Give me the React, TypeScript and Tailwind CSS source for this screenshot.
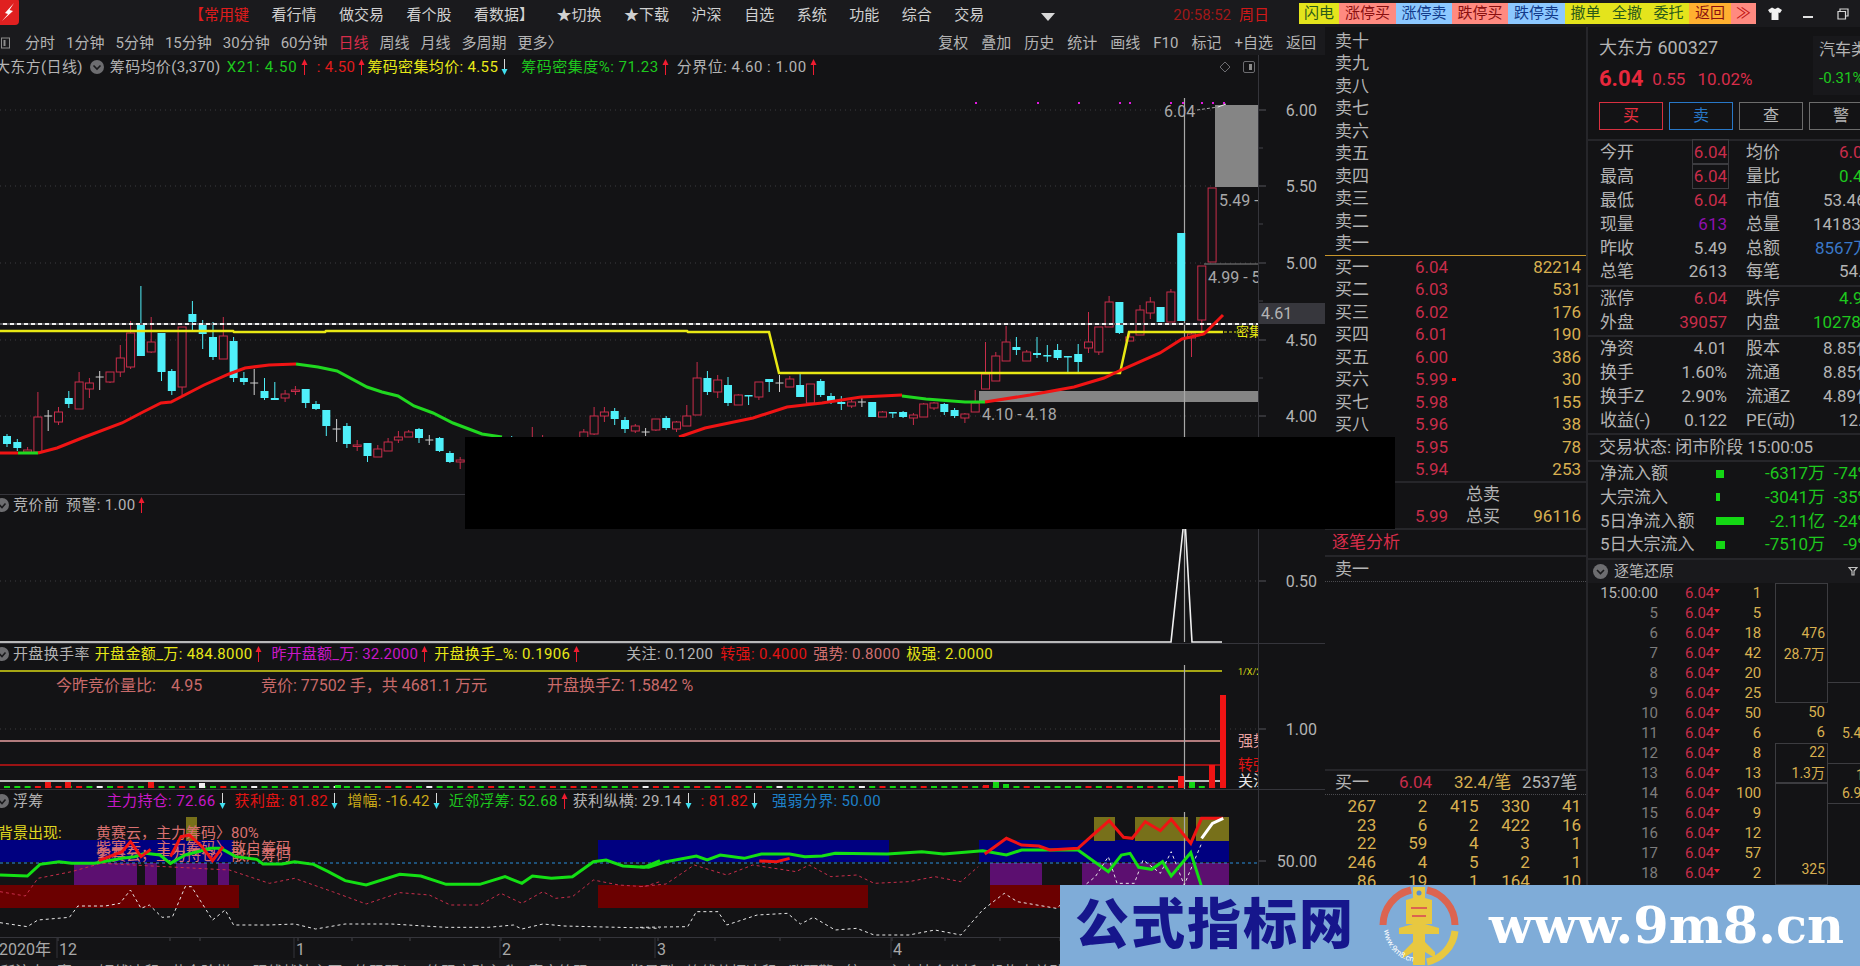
import React from "react";

// candle: type, body top, body bottom, wick top, wick bottom. c = cyan, r = red, x = cross
type Candle = [string, number, number, number, number];
const candles: (Candle | null)[] = [
  ["c", 436, 444, 434, 447], ["c", 442, 448, 439, 451], ["r", 450, 452, 447, 453], ["r", 417, 452, 392, 453],
  ["x", 416, 416, 410, 431], ["r", 412, 422, 407, 425], ["c", 398, 404, 391, 408], ["r", 382, 409, 372, 409],
  ["r", 383, 389, 378, 398], ["x", 377, 377, 371, 390], ["r", 372, 382, 372, 383], ["r", 358, 372, 345, 377],
  ["r", 333, 367, 321, 369], ["c", 324, 356, 286, 356], ["r", 342, 352, 317, 353], ["c", 333, 372, 333, 381],
  ["c", 371, 391, 369, 395], ["r", 327, 387, 327, 395], ["c", 314, 322, 301, 330], ["c", 323, 334, 320, 349],
  ["c", 337, 357, 322, 360], ["r", 336, 359, 317, 359], ["c", 341, 378, 337, 382], ["c", 378, 382, 372, 385],
  ["x", 383, 383, 369, 395], ["c", 391, 398, 378, 400], ["c", 398, 400, 382, 400], ["r", 394, 398, 390, 402],
  ["r", 390, 391, 386, 395], ["c", 389, 403, 389, 408], ["c", 404, 409, 401, 410], ["c", 410, 426, 410, 436],
  ["x", 429, 429, 419, 442], ["c", 426, 444, 423, 448], ["r", 445, 446, 440, 451], ["c", 443, 456, 443, 462],
  ["r", 449, 457, 445, 457], ["r", 442, 451, 438, 451], ["r", 437, 440, 431, 443], ["r", 432, 437, 430, 437],
  ["c", 429, 438, 428, 443], ["x", 440, 440, 435, 445], ["c", 438, 451, 437, 452], ["c", 453, 462, 451, 463],
  ["r", 460, 462, 457, 469], null, null, null, null,
  ["c", 440, 445, 436, 450], null, ["r", 440, 450, 427, 452], ["r", 440, 450, 435, 452], null, null, null,
  ["r", 432, 445, 429, 446], ["r", 416, 434, 407, 435], ["r", 412, 416, 407, 422], ["c", 411, 419, 408, 425],
  ["c", 420, 429, 417, 433], ["r", 426, 431, 424, 433], ["x", 432, 432, 428, 436], ["r", 419, 430, 419, 431],
  ["c", 418, 428, 416, 430], ["r", 422, 429, 421, 432], ["r", 416, 426, 405, 426], ["r", 378, 415, 362, 415],
  ["c", 378, 392, 371, 395], ["r", 380, 392, 375, 398], ["c", 385, 403, 377, 406], ["r", 395, 405, 394, 405],
  ["c", 395, 396, 395, 405], ["r", 382, 397, 382, 400], ["c", 379, 382, 379, 392], ["x", 383, 383, 375, 392],
  ["r", 379, 387, 376, 387], ["c", 385, 397, 372, 397], ["r", 384, 403, 384, 403], ["c", 381, 395, 379, 397],
  ["c", 396, 401, 393, 404], ["c", 402, 404, 396, 410], ["r", 402, 406, 400, 408], ["x", 402, 402, 398, 407],
  ["c", 402, 417, 402, 417], ["r", 412, 417, 411, 417], ["c", 412, 413, 412, 418], ["c", 412, 417, 411, 418],
  ["r", 415, 418, 413, 425], ["r", 404, 417, 403, 417], ["r", 403, 408, 402, 410], ["c", 404, 412, 403, 415],
  ["c", 410, 416, 408, 418], ["r", 414, 418, 413, 423], ["r", 403, 412, 390, 412], ["r", 374, 389, 342, 389],
  ["r", 356, 381, 352, 381], ["r", 342, 361, 326, 361], ["c", 347, 350, 337, 355], ["r", 352, 361, 350, 361],
  ["c", 353, 355, 337, 358], ["c", 355, 356, 345, 362], ["c", 350, 358, 344, 360], ["c", 356, 357, 356, 372],
  ["c", 354, 362, 344, 372], ["r", 342, 348, 312, 353], ["r", 327, 352, 327, 355], ["r", 302, 327, 296, 327],
  ["c", 302, 333, 302, 334], ["r", 337, 341, 332, 341], ["r", 310, 335, 305, 335], ["r", 302, 313, 297, 319],
  ["c", 307, 322, 307, 322], ["r", 292, 322, 289, 322], ["c", 233, 321, 233, 321], ["r", 334, 338, 333, 357],
  ["r", 266, 320, 266, 336], ["r", 188, 262, 188, 262],
];

const cx = (i: number) => 7 + 10.3 * i;
const z7 = (p: number[][]) => p.map(([x, y]) => `${x / 2.376},${630 + y / 3}`).join(" ");
const z8 = (p: number[][]) => p.map(([x, y]) => `${640 + x / 2.306},${630 + y / 3}`).join(" ");

const Arrow = ({ down }: { down?: boolean }) => (
  <svg width="7" height="16" viewBox="0 0 7 16" className="shrink-0">
    {down ? (
      <>
        <path d="M3.5 0V12" stroke="#d8d8d8" strokeWidth="1" />
        <path d="M0.5 10H6.5L3.5 16Z" fill="#40e0f0" />
      </>
    ) : (
      <>
        <path d="M3.5 4V16" stroke="#f01c30" strokeWidth="1" />
        <path d="M0.5 6H6.5L3.5 0Z" fill="#f01c30" />
      </>
    )}
  </svg>
);

const CheckDot = () => (
  <svg width="14" height="14" viewBox="0 0 14 14" className="-ml-[5px] mr-[4px] shrink-0">
    <circle cx="7" cy="7" r="7" fill="#6d6d70" />
    <path d="M3.5 6L7 9.5L10.5 5.5" stroke="#1a1a1c" strokeWidth="1.6" fill="none" />
  </svg>
);

const CandleMark = ({ c, i }: { c: Candle; i: number }) => {
  const [t, top, bot, wt, wb] = c;
  const x = cx(i);
  if (t === "x") {
    return (
      <g stroke="#cfcfcf" strokeWidth="1">
        <path d={`M${x} ${wt}V${wb}M${x - 4} ${top}H${x + 4}`} />
      </g>
    );
  }
  const col = t === "r" ? "#c82d4a" : "#4ff0fa";
  return (
    <g>
      <path d={`M${x} ${wt}V${wb}`} stroke={col} strokeWidth="1" />
      <rect
        x={x - 4}
        y={top}
        width="8"
        height={Math.max(bot - top, 1.5)}
        fill={t === "r" ? "#131315" : col}
        stroke={col}
        strokeWidth={t === "r" ? 1 : 0}
      />
    </g>
  );
};

const Panel = ({
  label,
  labelH,
  top,
  height,
  axis,
  children,
}: {
  label: React.ReactNode;
  labelH: string;
  top: number;
  height: number;
  axis: React.ReactNode;
  children: React.ReactNode;
}) => (
  <div className="flex border-b border-[#35353b]">
    <div className="w-[1258px] shrink-0">
      <div className={`flex items-center whitespace-nowrap overflow-hidden text-[15px] leading-none tracking-[0.35px] text-[#b4b4b4] ${labelH}`}>{label}</div>
      <svg width="1258" height={height} viewBox={`0 ${top} 1258 ${height}`} className="block">
        {children}
      </svg>
    </div>
    <div className="flex-1 border-l border-[#35353b]">{axis}</div>
  </div>
);

const AxisLabels = ({
  top,
  h,
  items,
  ticks,
  children,
}: {
  top: number;
  h: number;
  items: [string, number][];
  ticks?: number[];
  children?: React.ReactNode;
}) => (
  <svg width="66" height={h} viewBox={`1259 ${top} 66 ${h}`} className="block">
    {children}
    {items.map(([t, y]) => (
      <g key={t}>
        <path d={`M1259 ${y}H1266`} stroke="#55555a" />
        <text x="1317" y={y + 6} textAnchor="end" fontSize="16" fill="#b4b4b4">
          {t}
        </text>
      </g>
    ))}
    {(ticks || []).map((y) => (
      <path key={y} d={`M1259 ${y}H1263`} stroke="#44444a" />
    ))}
  </svg>
);

const MainLabel = () => (
  <>
    <span className="-ml-[5px]">大东方(日线)</span>
    <svg width="14" height="14" viewBox="0 0 14 14" className="ml-[7px] mr-[6px] shrink-0">
      <circle cx="7" cy="7" r="7" fill="#6d6d70" />
      <path d="M3.5 5.5L7 9L10.5 5.5" stroke="#1a1a1c" strokeWidth="1.6" fill="none" />
    </svg>
    <span>筹码均价(3,370)</span>
    <span className="ml-[6px] tracking-[0.9px] text-[#1ec81e]">X21: 4.50</span>
    <span className="ml-[3px]"><Arrow /></span>
    <span className="ml-[9px] text-[#e01c1c]">: 4.50</span>
    <span className="ml-[3px]"><Arrow /></span>
    <span className="ml-[2px] text-[#e8e818]">筹码密集均价: 4.55</span>
    <span className="ml-[3px]"><Arrow down /></span>
    <span className="ml-[13px] tracking-[0.5px] text-[#1ec81e]">筹码密集度%: 71.23</span>
    <span className="ml-[3px]"><Arrow /></span>
    <span className="ml-[8px] tracking-[0.5px]">分界位: 4.60 : 1.00</span>
    <span className="ml-[3px]"><Arrow /></span>
    <svg width="36" height="14" viewBox="0 0 36 14" className="ml-auto mr-[2px] shrink-0">
      <path d="M5 2L10 7L5 12L0 7Z" fill="none" stroke="#6c6c70" />
      <rect x="23.5" y="1.5" width="11" height="11" rx="1.5" fill="none" stroke="#6c6c70" />
      <rect x="29" y="4" width="3" height="6" fill="#8c8c8c" />
    </svg>
  </>
);

const MainChart = () => (
  <>
    {[110, 186, 263, 340, 416].map((y) => (
      <path key={y} d={`M0 ${y}H1258`} stroke="#3c3c40" strokeDasharray="1 4" />
    ))}
    <rect x="1215" y="105" width="43" height="82" fill="#858585" />
    <rect x="979" y="391" width="279" height="11" fill="#858585" />
    <path d="M1204 264H1258" stroke="#858585" />
    <path d="M1184.5 98V437" stroke="#a8a8a8" strokeWidth="1.2" />
    {candles.map((c, i) => (c ? <CandleMark key={i} c={c} i={i} /> : null))}
    <polyline points="0,331 233,331 234,332 325,332 326,331 687,331 688,332 769,332 779,373 1120,373 1129,332 1223,332" fill="none" stroke="#e8e814" strokeWidth="2.5" />
    <path d="M0 324H1258" stroke="#f0f0f0" strokeWidth="2" />
    <path d="M0 324H1258" stroke="#55555a" strokeWidth="2" strokeDasharray="3 4" />
    <polyline points="0,453 18,453" fill="none" stroke="#f01414" strokeWidth="3" />
    <polyline points="18,453 38,453" fill="none" stroke="#20d820" strokeWidth="3" />
    <polyline points="38,453 57,448 82,438 122,423 143,412 161,403 171,402 204,385 229,374 245,368 269,365 296,364" fill="none" stroke="#f01414" strokeWidth="3" />
    <polyline points="296,364 318,367 337,371 367,387 382,392 398,396 414,406 433,413 453,423 482,434 502,437" fill="none" stroke="#20d820" strokeWidth="3" />
    <polyline points="679,437 705,428 753,418 787,407 822,403 861,397 902,395" fill="none" stroke="#f01414" strokeWidth="3" />
    <polyline points="902,396 926,399 965,402 985,402" fill="none" stroke="#20d820" strokeWidth="3" />
    <polyline points="985,402 1030,395 1074,387 1104,378 1121,370 1160,353 1182,339 1204,334 1223,315" fill="none" stroke="#f01414" strokeWidth="3" />
    {[975, 1037, 1078, 1119, 1129, 1170, 1182, 1201, 1212, 1223].map((x) => (
      <rect key={x} x={x} y="102" width="2" height="2" fill="#e018e0" />
    ))}
    <path d="M1197 110L1218 107" stroke="#a8a8a8" strokeDasharray="3 2" />
    <path d="M1218 107L1226 104" stroke="#e8e8e8" />
    <g fontSize="16" fill="#a8a8a8">
      <text x="1164" y="117">6.04</text>
      <text x="1219" y="206">5.49 - 6.04</text>
      <text x="1208" y="283">4.99 - 5.49</text>
      <text x="982" y="420">4.10 - 4.18</text>
    </g>
    <path d="M1224 332H1236" stroke="#e8e814" strokeDasharray="3 2" />
    <text x="1236" y="336" fontSize="13" fill="#e8e814">密集</text>
  </>
);

const SubOne = () => (
  <>
    <path d="M0 581H1258" stroke="#3c3c40" strokeDasharray="1 4" />
    <path d="M1184.5 515V642" stroke="#a8a8a8" strokeWidth="1.2" />
    <polyline points="0,642 1171,642 1184,520 1185,520 1192,642 1222,642" fill="none" stroke="#f0f0f0" strokeWidth="1.6" />
  </>
);

const spikeBars: [number, number, string][] = [
  [1223, 695, "#f01414"], [1212, 765, "#f01414"], [1181, 776, "#f01414"], [1192, 782, "#12d812"],
  [996, 782, "#12d812"], [1006, 784, "#12d812"], [986, 785, "#f01414"], [48, 782, "#f01414"],
  [68, 782, "#f01414"], [151, 782, "#f01414"], [202, 783, "#f0f0f0"], [338, 785, "#12d812"],
];

const SubTwo = () => (
  <>
    <path d="M0 729H1258" stroke="#3c3c40" strokeDasharray="1 4" />
    <path d="M0 671H1222" stroke="#d8d814" strokeWidth="1.5" />
    <path d="M0 741H1222" stroke="#e8a0a0" strokeWidth="1.5" />
    <path d="M0 765H1222" stroke="#c81414" strokeWidth="1.5" />
    <path d="M0 781H1222" stroke="#f0f0f0" strokeWidth="1.5" />
    <path d="M1184.5 665V790" stroke="#a8a8a8" strokeWidth="1.2" />
    {candles.map((c, i) =>
      c || i > 44 ? (
        <rect
          key={i}
          x={cx(i) - 3}
          y="786"
          width="6"
          height="2"
          fill={c && c[0] === "c" ? "#12d812" : c && c[0] === "x" ? "#f0f0f0" : i % 2 ? "#f01414" : "#12d812"}
        />
      ) : null,
    )}
    {spikeBars.map(([x, y, col]) => (
      <rect key={x} x={x - 3} y={y} width="6" height={788 - y} fill={col} />
    ))}
    <g fontSize="15">
      <text x="1238" y="675" fontSize="9" fill="#d8d814">1/X/2</text>
      <text x="1238" y="746" fill="#e8a0a0">强势</text>
      <text x="1238" y="770" fill="#e01414">转强</text>
      <text x="1238" y="786" fill="#e8e8e8">关注</text>
    </g>
    <g fontSize="16" fill="#c86a6a">
      <text x="56" y="691">今昨竞价量比:</text>
      <text x="171" y="691">4.95</text>
      <text x="261" y="691">竞价: 77502 手，共 4681.1 万元</text>
      <text x="547" y="691">开盘换手Z: 1.5842 %</text>
    </g>
  </>
);

const SubThree = () => (
  <>
    {[[0, 233], [598, 889], [979, 1229]].map(([a, b]) => (
      <rect key={a} x={a} y="840" width={b - a} height="22" fill="#000080" />
    ))}
    {[[74, 137], [145, 157], [176, 207], [218, 229], [990, 1042], [1082, 1229]].map(([a, b]) => (
      <rect key={a} x={a} y="863" width={b - a} height="22" fill="#5c0f70" />
    ))}
    {[[0, 239], [598, 868], [990, 1229]].map(([a, b]) => (
      <rect key={a} x={a} y="885" width={b - a} height="23" fill="#6b0000" />
    ))}
    {[[186, 197, 817, 24], [1094, 1115, 817, 24], [1135, 1188, 817, 24], [1196, 1229, 817, 24]].map(([a, b, y, h]) => (
      <rect key={a} x={a} y={y} width={b - a} height={h} fill="#77701a" />
    ))}
    <path d="M0 863H1258" stroke="#2a8fdd" strokeWidth="1.2" strokeDasharray="3 3" />
    <path d="M1184.5 812V938" stroke="#a8a8a8" strokeWidth="1.2" />
    <text x="-2" y="838" fontSize="15" fill="#e0d820">背景出现:</text>
    <g fontSize="15" fill="#d87070">
      <text x="96" y="838">黄赛云，主力筹码〉80%</text>
      <text x="96" y="853">紫赛云，主力筹码〉散户筹码</text>
      <text x="96" y="860">紫赛云，主力持仓〉散户筹码</text>
    </g>
    <polyline
      points={z7([[0, 878], [65, 890], [90, 870], [165, 862], [185, 828], [250, 828], [285, 820], [310, 780], [335, 835], [355, 825], [385, 862], [410, 860], [440, 770], [455, 770], [495, 850], [505, 870], [535, 840], [555, 885], [640, 885], [700, 882], [750, 897], [820, 882], [930, 882], [1060, 892], [1160, 892], [1220, 885], [1240, 897], [1290, 882], [1340, 888], [1568, 895]])}
      fill="none" stroke="#e8e8e8" strokeDasharray="3 3"
    />
    <polyline
      points={z8([[0, 892], [110, 890], [130, 845], [180, 845], [200, 885], [270, 855], [340, 850], [370, 882], [400, 862], [450, 900], [500, 895], [540, 915], [620, 915], [680, 900], [740, 915], [790, 840], [840, 790], [870, 815], [960, 835], [1050, 740], [1080, 680], [1100, 760], [1140, 760], [1160, 690], [1200, 730], [1225, 665], [1255, 765], [1295, 640]])}
      fill="none" stroke="#e8e8e8" strokeDasharray="3 3"
    />
    <polyline
      points={z7([[0, 785], [60, 798], [90, 745], [170, 725], [240, 700], [545, 720], [640, 760], [700, 745], [790, 785], [870, 822], [950, 788], [1020, 795], [1070, 825], [1140, 825], [1190, 790], [1240, 820], [1290, 785], [1320, 805], [1360, 800], [1410, 750], [1470, 765], [1530, 770], [1568, 755]])}
      fill="none" stroke="#c82d4a" strokeDasharray="3 3"
    />
    <polyline
      points={z8([[0, 770], [60, 762], [125, 705], [200, 735], [260, 705], [360, 725], [390, 705], [440, 740], [500, 735], [540, 760], [620, 755], [680, 740], [740, 755], [780, 710]])}
      fill="none" stroke="#c82d4a" strokeDasharray="3 3"
    />
    <polyline
      points={z7([[0, 735], [65, 738], [95, 703], [140, 695], [170, 700], [225, 700], [290, 685], [320, 680], [345, 670], [380, 675], [405, 700], [440, 675], [500, 655], [525, 655], [560, 680], [610, 688], [625, 702], [670, 702], [700, 695], [745, 703], [780, 725], [820, 752], [870, 765], [950, 733], [1000, 738], [1060, 763], [1140, 763], [1200, 740], [1240, 760], [1265, 738], [1310, 745], [1360, 740], [1410, 695], [1440, 690], [1480, 708], [1530, 712], [1568, 692]])}
      fill="none" stroke="#14e014" strokeWidth="3"
    />
    <polyline
      points={z8([[0, 710], [20, 712], [60, 695], [130, 678], [155, 690], [185, 675], [240, 685], [280, 672], [345, 672], [380, 680], [420, 678], [450, 670], [570, 672], [650, 665], [700, 672], [790, 662], [845, 675], [880, 660], [1010, 660], [1080, 725], [1110, 675], [1130, 670], [1150, 712], [1180, 718], [1205, 695], [1225, 738], [1270, 668], [1295, 770]])}
      fill="none" stroke="#14e014" strokeWidth="3"
    />
    <polyline points={z7([[235, 692], [290, 665], [310, 635], [335, 680], [358, 658]])} fill="none" stroke="#f01414" strokeWidth="3" />
    <polyline points={z7([[405, 680], [430, 620], [450, 615], [480, 650], [505, 692], [530, 650]])} fill="none" stroke="#f01414" strokeWidth="3" />
    <polyline points={z8([[275, 693], [315, 695], [345, 685]])} fill="none" stroke="#f01414" strokeWidth="3" />
    <polyline
      points={z8([[795, 672], [845, 625], [880, 645], [920, 648], [945, 660], [1010, 655], [1040, 620], [1082, 572], [1115, 622], [1135, 625], [1165, 575], [1200, 602], [1225, 568], [1270, 640], [1295, 565], [1345, 565]])}
      fill="none" stroke="#f01414" strokeWidth="3"
    />
    <polyline points={z8([[1295, 625], [1320, 580], [1345, 565]])} fill="none" stroke="#ffffff" strokeWidth="3" />
  </>
);

const TimeAxis = () => (
  <svg width="1325" height="22" viewBox="0 938 1325 22" className="block">
    <path d="M1258.5 938V960" stroke="#35353b" />
    {[58, 170, 200, 298, 352, 410, 501, 560, 600, 658, 715, 780, 892, 945, 1000, 1060, 1120, 1180].map((x) => (
      <path key={x} d={`M${x} 938V941`} stroke="#44444a" />
    ))}
    {[57, 294, 500, 655, 891].map((x) => (
      <path key={x} d={`M${x} 938V958`} stroke="#35353b" />
    ))}
    <g fontSize="16" fill="#a8a8a8">
      <text x="-1" y="955">2020年</text>
      <text x="59" y="955">12</text>
      <text x="296" y="955">1</text>
      <text x="502" y="955">2</text>
      <text x="657" y="955">3</text>
      <text x="893" y="955">4</text>
    </g>
  </svg>
);

const ask = ["卖十", "卖九", "卖八", "卖七", "卖六", "卖五", "卖四", "卖三", "卖二", "卖一"];
const bid: [string, string, string][] = [
  ["买一", "6.04", "82214"], ["买二", "6.03", "531"], ["买三", "6.02", "176"], ["买四", "6.01", "190"], ["买五", "6.00", "386"],
  ["买六", "5.99", "30"], ["买七", "5.98", "155"], ["买八", "5.96", "38"], ["买九", "5.95", "78"], ["买十", "5.94", "253"],
];
const queue = [
  [267, 2, 415, 330, 41], [23, 6, 2, 422, 16], [22, 59, 4, 3, 1], [246, 4, 5, 2, 1], [86, 19, 1, 164, 10],
];

const OrderBook = () => (
  <div className="w-[263px] shrink-0 border-r-2 border-[#26262a] text-[17px] leading-none text-[#b4b4b4]">
    <div className="pt-[3px]">
      {ask.map((t) => (
        <div key={t} className="flex h-[22.5px] items-center pl-[10px]">{t}</div>
      ))}
    </div>
    <div className="h-[1px] bg-[#c8962c]" />
    {bid.map(([a, p, v]) => (
      <div key={a} className="flex h-[22.5px] items-center pl-[10px]">
        <span className="w-[80px]">{a}</span>
        <span className="text-[#c82d4a]">{p}</span>
        {p === "5.99" && <span className="ml-[4px] h-[3px] w-[4px] bg-[#f01414]" />}
        <span className="ml-auto pr-[5px] text-[#d8b050]">{v}</span>
      </div>
    ))}
    <div className="border-y-2 border-[#26262a]">
      <div className="flex h-[22.5px] items-center pl-[141px]">总卖</div>
      <div className="flex h-[22.5px] items-center pl-[90px]">
        <span className="w-[51px] text-[#c82d4a]">5.99</span>
        <span>总买</span>
        <span className="ml-auto pr-[5px] text-[#d8b050]">96116</span>
      </div>
    </div>
    <div className="flex h-[27px] items-center border-b-2 border-[#26262a] pl-[7px] text-[#d82d4a]">逐笔分析</div>
    <div className="flex h-[25px] items-center border-b border-dotted border-[#4a4a4e] pl-[10px]">卖一</div>
    <div className="h-[189px] border-b-2 border-[#26262a]" />
    <div className="flex h-[24px] items-center border-b border-dotted border-[#4a4a4e] pl-[10px]">
      <span className="w-[64px]">买一</span>
      <span className="w-[55px] text-[#c82d4a]">6.04</span>
      <span className="w-[68px] text-[#d8b050]">32.4/笔</span>
      <span>2537笔</span>
    </div>
    <div className="grid w-[256px] grid-cols-5 pt-[2px] text-right text-[#d8b050]">
      {queue.flat().map((n, i) => (
        <div key={i} className="flex h-[18.7px] items-center justify-end">{n}</div>
      ))}
    </div>
  </div>
);

const R = "text-[#c82d4a]";
const G = "text-[#1ec81e]";
const W = "text-[#b4b4b4]";
const B = "text-[#3a78c8]";
const P = "text-[#9010b0]";

type Stat = [string, string, string, string, string, string, string];
const stats1: Stat[] = [
  ["今开", "6.04", R, "均价", "6.04", R, "ml-[26px]"],
  ["最高", "6.04", R, "量比", "0.46", G, "ml-[26px]"],
  ["最低", "6.04", R, "市值", "53.46亿", W, "ml-[10px]"],
  ["现量", "613", P, "总量", "14183手", W, "ml-0"],
  ["昨收", "5.49", W, "总额", "8567万", B, "ml-[2px]"],
  ["总笔", "2613", W, "每笔", "54.3", W, "ml-[26px]"],
];
const stats2: Stat[] = [
  ["涨停", "6.04", R, "跌停", "4.94", G, "ml-[26px]"],
  ["外盘", "39057", R, "内盘", "102789", G, "ml-0"],
];
const stats3: Stat[] = [
  ["净资", "4.01", W, "股本", "8.85亿", W, "ml-[10px]"],
  ["换手", "1.60%", W, "流通", "8.85亿", W, "ml-[10px]"],
  ["换手Z", "2.90%", W, "流通Z", "4.89亿", W, "ml-[10px]"],
  ["收益(-)", "0.122", W, "PE(动)", "12.3", W, "ml-[26px]"],
];

const StatRow = ({ s, h, boxed }: { s: Stat; h: string; boxed?: boolean }) => (
  <div className={`flex items-center whitespace-nowrap pl-[12px] ${h}`}>
    <span className="w-[50px] shrink-0 text-[#b4b4b4]">{s[0]}</span>
    <span className={`w-[79px] shrink-0 text-right ${s[2]}`}>
      {boxed ? <span className="border border-[#3c3c40] px-[1px] py-[2px]">{s[1]}</span> : <span className="pr-[2px]">{s[1]}</span>}
    </span>
    <span className="ml-[17px] w-[67px] shrink-0 text-[#b4b4b4]">{s[3]}</span>
    <span className={`shrink-0 ${s[6]} ${s[5]}`}>{s[4]}</span>
  </div>
);

const flows: [string, string, string, string][] = [
  ["净流入额", "w-[8px] h-[8px]", "-6317万", "-74%"],
  ["大宗流入", "w-[4px] h-[8px]", "-3041万", "-35%"],
  ["5日净流入额", "w-[28px] h-[8px]", "-2.11亿", "-24%"],
  ["5日大宗流入", "w-[9px] h-[8px]", "-7510万", "-9%"],
];

const ticks = ["15:00:00", "5", "6", "7", "8", "9", "10", "11", "12", "13", "14", "15", "16", "17", "18"];
const tickVols = [1, 5, 18, 42, 20, 25, 50, 6, 8, 13, 100, 9, 12, 57, 2];

const TickTable = () => (
  <div className="flex text-[15px] leading-none">
    <div className="w-[187px] shrink-0 pt-[1px]">
      {ticks.map((t, i) => (
        <div key={t} className="flex h-[20px] items-center">
          <span className={`w-[70px] text-right ${i ? "text-[#7c7c7c]" : "text-[#b4b4b4]"}`}>{t}</span>
          <span className="ml-[27px] text-[#c82d4a]">6.04</span>
          <svg width="6" height="4" viewBox="0 0 6 4" className="mb-[5px] shrink-0"><path d="M0 0H6L3 4Z" fill="#e81c30" /></svg>
          <span className="w-[41px] text-right text-[#d8b050]">{tickVols[i]}</span>
        </div>
      ))}
    </div>
    <div className="w-[53px] shrink-0 text-right text-[14px] text-[#d8b050]">
      <div className="flex h-[120px] flex-col justify-end gap-[7px] border border-[#3c3c40] pb-[41px] pr-[2px]">
        <span>476</span><span>28.7万</span>
      </div>
      <div className="flex h-[20px] items-center justify-end pr-[3px] text-[15px]">50</div>
      <div className="flex h-[20px] items-center justify-end pr-[3px] text-[15px]">6</div>
      <div className="flex h-[40px] flex-col justify-center gap-[7px] border border-[#3c3c40] pr-[2px]">
        <span>22</span><span>1.3万</span>
      </div>
      <div className="flex h-[102px] flex-col justify-end border border-[#3c3c40] pb-[8px] pr-[2px]">
        <span>325</span>
      </div>
    </div>
    <div className="flex-1 text-[14px] text-[#d8b050]">
      <div className="h-[100px] border-b border-[#3c3c40]" />
      <div className="flex h-[81px] items-end border-b border-[#3c3c40] pb-[23px] pl-[14px]">5.4</div>
      <div className="h-[40px] border-b border-[#3c3c40] pl-[14px]">
        <div className="pl-[14px] pt-[4px]">1</div>
        <div className="pt-[4px]">6.9</div>
      </div>
    </div>
  </div>
);

const Quote = () => (
  <div className="flex-1 overflow-hidden text-[17px] leading-none">
    <div className="flex h-[114px] border-b-2 border-[#26262a]">
      <div className="w-[225px] shrink-0 pl-[11px] pt-[11px]">
        <div className="flex h-[20px] items-center text-[18px] text-[#b4b4b4]">大东方 600327</div>
        <div className="mt-[9px] flex h-[24px] items-center text-[#d82d4a]">
          <span className="text-[22px] font-bold text-[#e8283c]">6.04</span>
          <span className="ml-[9px]">0.55</span>
          <span className="ml-[12px]">10.02%</span>
        </div>
        <div className="mt-[11px] flex w-[300px] gap-[6px] text-[16px]">
          <div className="flex h-[28px] w-[64px] items-center justify-center border border-[#d83040] text-[#e83040]">买</div>
          <div className="flex h-[28px] w-[64px] items-center justify-center border border-[#2878c8] text-[#2878c8]">卖</div>
          <div className="flex h-[28px] w-[64px] items-center justify-center border border-[#6c6c6c] text-[#b4b4b4]">查</div>
          <div className="flex h-[28px] w-[64px] items-center justify-center border border-[#6c6c6c] text-[#b4b4b4]">警</div>
        </div>
      </div>
      <div className="mt-[9px] h-[59px] w-[60px] shrink-0 bg-[#18181b] pl-[6px] text-[16px] text-[#b4b4b4]">
        <div className="flex h-[28px] items-center whitespace-nowrap">汽车类</div>
        <div className="flex h-[28px] items-center whitespace-nowrap text-[15px] text-[#1ec81e]">-0.31%</div>
      </div>
    </div>
    <div className="border-b-2 border-[#26262a] pb-[1px]">
      {stats1.map((s, i) => <StatRow key={s[0]} s={s} h="h-[23.8px]" boxed={i < 2} />)}
    </div>
    <div className="border-b-2 border-[#26262a]">
      {stats2.map((s) => <StatRow key={s[0]} s={s} h="h-[24px]" />)}
    </div>
    <div className="border-b-2 border-[#26262a]">
      {stats3.map((s) => <StatRow key={s[0]} s={s} h="h-[24px]" />)}
    </div>
    <div className="flex h-[27px] items-center border-b-2 border-[#26262a] pl-[11px] text-[#b4b4b4]">交易状态: 闭市阶段 15:00:05</div>
    <div className="border-b-2 border-[#26262a] pb-[1px]">
      {flows.map(([a, bar, v, pc]) => (
        <div key={a} className="flex h-[23.7px] items-center whitespace-nowrap pl-[12px]">
          <span className="w-[116px] shrink-0 text-[#b4b4b4]">{a}</span>
          <span className="w-[45px] shrink-0"><span className={`block bg-[#14d814] ${bar}`} /></span>
          <span className="w-[64px] shrink-0 text-right text-[#1ec81e]">{v}</span>
          <span className="w-[45px] shrink-0 text-right text-[#1ec81e]">{pc}</span>
        </div>
      ))}
    </div>
    <div className="flex h-[23px] items-center bg-[#19191c] pl-[5px] text-[15px] text-[#b4b4b4]">
      <svg width="15" height="15" viewBox="0 0 15 15" className="mr-[6px] shrink-0">
        <circle cx="7.5" cy="7.5" r="7.5" fill="#6d6d70" />
        <path d="M4 6L7.5 9.5L11 6" stroke="#1a1a1c" strokeWidth="1.6" fill="none" />
      </svg>
      <span>逐笔还原</span>
      <svg width="10" height="10" viewBox="0 0 10 10" className="ml-auto mr-[2px]">
        <path d="M1 1.5H9L6 5V9H4V5Z" fill="none" stroke="#c0c0c0" strokeWidth="1.2" />
      </svg>
    </div>
    <TickTable />
  </div>
);

const menu = ["【常用键", "看行情", "做交易", "看个股", "看数据】", "★切换", "★下载", "沪深", "自选", "系统", "功能", "综合", "交易"];
const quick: [string, string][] = [
  ["闪电", "w-[40px] bg-[#e4e41c] text-[#2a5a1a]"],
  ["涨停买", "w-[57px] bg-[#ff8a80] text-[#8a1010]"],
  ["涨停卖", "w-[56px] bg-[#8cc8ff] text-[#123a8a]"],
  ["跌停买", "w-[56px] bg-[#ff8a80] text-[#8a1010]"],
  ["跌停卖", "w-[57px] bg-[#8cc8ff] text-[#123a8a]"],
  ["撤单", "w-[41px] bg-[#e4e41c] text-[#2a5a1a]"],
  ["全撤", "w-[42px] bg-[#e4e41c] text-[#2a5a1a]"],
  ["委托", "w-[41px] bg-[#e4e41c] text-[#2a5a1a]"],
  ["返回", "w-[42px] bg-[#ffb030] text-[#8a1010]"],
];

const TopBar = () => (
  <div className="flex h-[27px] items-center bg-[#1a1a1d] text-[15px] leading-none text-[#d0d0d0]">
    <svg width="20" height="26" viewBox="0 0 20 26" className="shrink-0 self-start">
      <rect x="-4" y="-2" width="23" height="27" rx="4" fill="#e02020" />
      <path d="M14 3L5 13L8 14L2 21L13 11L9.5 10Z" fill="#ffffff" />
    </svg>
    <div className="ml-[169px] mt-[3px] flex gap-[22.5px] whitespace-nowrap">
      {menu.map((m, i) => (
        <span key={m} className={i === 0 ? "text-[#e01c1c]" : ""}>{m}</span>
      ))}
    </div>
    <svg width="14" height="8" viewBox="0 0 14 8" className="ml-[57px] mt-[6px] shrink-0"><path d="M0 0H14L7 8Z" fill="#d8d8d8" /></svg>
    <span className="ml-[118px] mt-[3px] whitespace-nowrap text-[#a01818]">20:58:52</span>
    <span className="ml-[8px] mt-[3px] whitespace-nowrap text-[#d01818]">周日</span>
    <div className="ml-[30px] flex h-[21px] whitespace-nowrap text-[15px]">
      {quick.map(([t, c]) => (
        <div key={t} className={`flex items-center justify-center ${c}`}>{t}</div>
      ))}
      <div className="flex w-[25px] items-center justify-center bg-[#ff8a80] text-[15px] text-[#c01010]">≫</div>
    </div>
    <svg width="14" height="13" viewBox="0 0 14 13" className="ml-[12px] shrink-0">
      <path d="M4 0.5L7 2L10 0.5L14 3L12 6L10.5 5.5V13H3.5V5.5L2 6L0 3Z" fill="#f0f0f0" />
    </svg>
    <div className="ml-[21px] mt-[6px] h-[2px] w-[10px] bg-[#e0e0e0]" />
    <svg width="12" height="12" viewBox="0 0 12 12" className="ml-[24px] shrink-0">
      <path d="M3 3V1H11V8H9M1 3.5H8.5V11H1Z" fill="none" stroke="#d8d8d8" strokeWidth="1.2" />
    </svg>
  </div>
);

const periods = ["分时", "1分钟", "5分钟", "15分钟", "30分钟", "60分钟", "日线", "周线", "月线", "多周期", "更多〉"];
const tools = ["复权", "叠加", "历史", "统计", "画线", "F10", "标记", "+自选", "返回"];

const ToolBar = () => (
  <div className="flex h-[28px] items-center whitespace-nowrap bg-[#1a1a1d] pt-[4px] text-[15px] leading-none text-[#b4b4b4]">
    <svg width="10" height="13" viewBox="0 0 10 13" className="ml-[1px] shrink-0">
      <rect x="0.5" y="1" width="8" height="10" fill="none" stroke="#8c8c8c" />
      <rect x="2.5" y="3" width="2" height="6" fill="#8c8c8c" />
    </svg>
    <div className="ml-[14px] flex gap-[11px]">
      {periods.map((p) => (
        <span key={p} className={p === "日线" ? "text-[#d82d4a]" : ""}>{p}</span>
      ))}
    </div>
    <div className="ml-auto flex gap-[13px] pr-[9px]">
      {tools.map((t) => <span key={t}>{t}</span>)}
    </div>
  </div>
);

const tabs = ["所注人", "窗口", "短线决印", "黄金阶梯B", "阳线战法主图", "筹码双入", "筹码启动主升", "真空筹码", "CPV指量型", "均线共振决印", "涨预警", "统一", "主力持仓分析", "机构大单动向", "高"];

const Watermark = () => (
  <div className="absolute bottom-0 left-[1060px] flex h-[81px] w-[800px] items-center bg-[#7facd8]">
    <span className="ml-[15px] whitespace-nowrap text-[54px] font-black leading-none tracking-[2px] text-[#16168c]">公式指标网</span>
    <svg width="80" height="80" viewBox="0 0 80 80" className="ml-[24px] shrink-0">
      <path d="M4 39A36 36 0 0 1 32 4" fill="none" stroke="#dc6450" strokeWidth="7" />
      <path d="M48 4A36 36 0 0 1 76 39" fill="none" stroke="#dc6450" strokeWidth="7" />
      <path d="M76 45A36 36 0 0 1 48 76" fill="none" stroke="#e8c840" strokeWidth="7" />
      <path d="M34 1H46V12L53 14V38H46L60 42V48H46V56L56 66V72L46 66V79H34V66L24 72V66L34 56V48H20V42L34 38H27V14L34 12Z" fill="#e8c840" />
      <circle cx="40" cy="7" r="2.5" fill="#5a8fd0" />
      <path d="M32 22H48M33 30H47" stroke="#dc6450" strokeWidth="2" />
      <path id="wmArc" d="M5 44A35 35 0 0 0 36 76" fill="none" />
      <text fontSize="8" fill="#ffffff">
        <textPath href="#wmArc">www.9m8.cn</textPath>
      </text>
    </svg>
    <span className="ml-[30px] whitespace-nowrap text-[51px] font-bold leading-none text-white [font-family:'DejaVu_Serif',serif]">www.9m8.cn</span>
  </div>
);

const App = () => (
  <div className="relative h-[966px] w-[1860px] overflow-hidden bg-[#131315] [font-family:Roboto,'Noto_Sans_CJK_SC',sans-serif]">
    <TopBar />
    <div className="flex h-[939px]">
      <div className="w-[1325px] shrink-0">
        <ToolBar />
        <Panel
          label={<MainLabel />}
          labelH="h-[24px]"
          top={79}
          height={415}
          axis={
            <AxisLabels
              top={55}
              h={439}
              items={[["6.00", 110], ["5.50", 186], ["5.00", 263], ["4.50", 340], ["4.00", 416]]}
              ticks={[148, 224, 301, 378]}
            >
              <rect x="1259" y="303" width="66" height="21" fill="#37373d" />
              <text x="1261" y="319" fontSize="16" fill="#b4b4b4">4.61</text>
            </AxisLabels>
          }
        >
          <MainChart />
        </Panel>
        <Panel
          label={
            <>
              <CheckDot />
              <span>竞价前</span>
              <span className="ml-[7px]">预警: 1.00</span>
              <span className="ml-[3px]"><Arrow /></span>
            </>
          }
          labelH="h-[20px]"
          top={515}
          height={128}
          axis={<AxisLabels top={495} h={148} items={[["0.50", 581]]} />}
        >
          <SubOne />
        </Panel>
        <Panel
          label={
            <>
              <CheckDot />
              <span>开盘换手率</span>
              <span className="ml-[5px] text-[#e8e818]">开盘金额_万: 484.8000</span>
              <span className="ml-[3px]"><Arrow /></span>
              <span className="ml-[9px] tracking-[0.2px] text-[#c818c8]">昨开盘额_万: 32.2000</span>
              <span className="ml-[3px]"><Arrow /></span>
              <span className="ml-[6px] text-[#e8e818]">开盘换手_%: 0.1906</span>
              <span className="ml-[3px]"><Arrow /></span>
              <span className="ml-[46px]">关注: 0.1200</span>
              <span className="ml-[7px] text-[#e01414]">转强: 0.4000</span>
              <span className="ml-[6px] text-[#d07070]">强势: 0.8000</span>
              <span className="ml-[6px] text-[#e0e018]">极强: 2.0000</span>
            </>
          }
          labelH="h-[20px]"
          top={664}
          height={125}
          axis={<AxisLabels top={644} h={145} items={[["1.00", 729]]} />}
        >
          <SubTwo />
        </Panel>
        <Panel
          label={
            <>
              <CheckDot />
              <span>浮筹</span>
              <span className="ml-[63px] text-[#c818c8]">主力持仓: 72.66</span>
              <span className="ml-[3px]"><Arrow down /></span>
              <span className="ml-[9px] text-[#e01414]">获利盘: 81.82</span>
              <span className="ml-[3px]"><Arrow down /></span>
              <span className="ml-[9px] text-[#c8a818]">增幅: -16.42</span>
              <span className="ml-[3px]"><Arrow down /></span>
              <span className="ml-[9px] text-[#1ec81e]">近邻浮筹: 52.68</span>
              <span className="ml-[3px]"><Arrow /></span>
              <span className="ml-[5px]">获利纵横: 29.14</span>
              <span className="ml-[3px]"><Arrow down /></span>
              <span className="ml-[9px] text-[#e01414]">: 81.82</span>
              <span className="ml-[3px]"><Arrow down /></span>
              <span className="ml-[14px] text-[#1e80c8]">强弱分界: 50.00</span>
            </>
          }
          labelH="h-[22px]"
          top={812}
          height={125}
          axis={<AxisLabels top={790} h={147} items={[["50.00", 861]]} />}
        >
          <SubThree />
        </Panel>
        <TimeAxis />
        <div className="flex h-[6px] gap-[12px] overflow-hidden whitespace-nowrap bg-[#1a1a1d] pt-[2px] text-[15px] leading-[20px] text-[#a8a8a8]">
          {tabs.map((t) => <span key={t}>{t}</span>)}
        </div>
      </div>
      <OrderBook />
      <Quote />
    </div>
    <div className="absolute left-[465px] top-[437px] h-[92px] w-[930px] bg-black" />
    <Watermark />
  </div>
);

export default App;
